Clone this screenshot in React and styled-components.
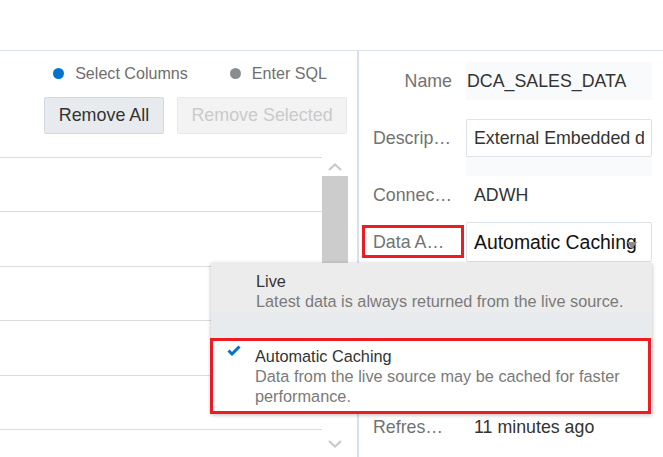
import React from 'react';
import styled, { createGlobalStyle } from 'styled-components';

const GlobalStyle = createGlobalStyle`
  html, body {
    margin: 0;
    padding: 0;
    background: #fff;
    font-family: 'Liberation Sans', Arial, sans-serif;
  }
  * {
    box-sizing: border-box;
  }
`;

const Page = styled.div`
  width: 663px;
  height: 457px;
  overflow: hidden;
  display: flex;
  flex-direction: column;
`;

const TopBar = styled.div`
  height: 51px;
  flex-shrink: 0;
  border-bottom: 1px solid #dbe3eb;
`;

const Main = styled.div`
  position: relative;
  flex: 1;
  display: flex;
  min-height: 0;
`;

const LeftPanel = styled.div`
  width: 359px;
  flex-shrink: 0;
  border-right: 2px solid #d8e1e9;
  display: flex;
  flex-direction: column;
`;

const ModeRow = styled.div`
  display: flex;
  justify-content: flex-end;
  gap: 42px;
  padding: 12px 30px 0 0;
  height: 31px;
`;

const RadioItem = styled.div`
  display: flex;
  align-items: center;
  gap: 11px;
  font-size: 16.1px;
  color: #6f6f6f;
  height: 20px;
`;

const Dot = styled.span`
  width: 11px;
  height: 11px;
  border-radius: 50%;
  background: ${({ $active }) => ($active ? '#0572ce' : '#8a8d90')};
`;

const ButtonRow = styled.div`
  display: flex;
  justify-content: flex-end;
  gap: 13px;
  padding: 15px 10px 0 0;
`;

const Button = styled.button`
  height: 37px;
  width: ${({ $width }) => $width}px;
  font-family: inherit;
  font-size: 17.9px;
  border-radius: 2px;
  padding: 0;
  border: 1px solid ${({ disabled }) => (disabled ? '#e8e8e8' : '#d3d9df')};
  background: ${({ disabled }) => (disabled ? '#f3f3f3' : '#e8ebee')};
  color: ${({ disabled }) => (disabled ? '#cacaca' : '#333')};
`;

const ListArea = styled.div`
  display: flex;
  margin-top: 23px;
  flex: 1;
  min-height: 0;
  padding-right: 9px;
`;

const RowList = styled.div`
  width: 322px;
  display: flex;
  flex-direction: column;
`;

const Row = styled.div`
  height: 54.4px;
  flex-shrink: 0;
  border-top: 1px solid #dcdcdc;
`;

const ScrollTrack = styled.div`
  width: 26px;
  display: flex;
  flex-direction: column;
  align-items: center;
`;

const ArrowBox = styled.div`
  height: ${({ $h }) => $h}px;
  display: flex;
  align-items: center;
  justify-content: center;
  width: 100%;
`;

const Thumb = styled.div`
  width: 26px;
  height: 150px;
  background: #cccccc;
`;

const TrackFill = styled.div`
  flex: 1;
`;

const RightPanel = styled.div`
  flex: 1;
  padding: 11px 0 0 14px;
  display: flex;
  flex-direction: column;
`;

const Field = styled.div`
  display: grid;
  grid-template-columns: 79px 186px;
  column-gap: 14px;
  align-items: start;
  margin-top: ${({ $gap }) => $gap || 0}px;
`;

const Label = styled.div`
  position: relative;
  height: ${({ $h }) => $h || 38}px;
  display: flex;
  align-items: center;
  justify-content: ${({ $truncated }) => ($truncated ? 'flex-start' : 'flex-end')};
  font-size: 17.8px;
  color: #727272;
  white-space: nowrap;

  ${({ $highlight }) =>
    $highlight &&
    `
    &::after {
      content: '';
      position: absolute;
      left: -11px;
      right: -12px;
      top: 3px;
      bottom: 4px;
      border: 3px solid #ed1c24;
    }
  `}
`;

const StaticValue = styled.div`
  height: 38px;
  display: flex;
  align-items: center;
  padding-left: ${({ $boxed }) => ($boxed ? 1 : 8)}px;
  background: ${({ $boxed }) => ($boxed ? '#f9fafb' : 'transparent')};
  font-size: 17.8px;
  color: #333;
  white-space: nowrap;
`;

const TextAreaBox = styled.div`
  height: 57px;
  background: #f9fafb;
`;

const TextInput = styled.div`
  height: 38px;
  border: 1px solid #dde3e9;
  border-radius: 2px;
  background: #fff;
  display: flex;
  align-items: center;
  padding-left: 7px;
  font-size: 17.8px;
  color: #333;
  white-space: nowrap;
  overflow: hidden;
`;

const Select = styled.div`
  position: relative;
  height: 40px;
  border: 1px solid #dde3e9;
  border-radius: 2px;
  background: #fff;
  display: flex;
  align-items: center;
  padding-left: 7px;
  font-size: 19.4px;
  color: #111;
  white-space: nowrap;
  overflow: hidden;
`;

const Caret = styled.span`
  position: absolute;
  z-index: 1;
  right: 14px;
  top: 19px;
  width: 0;
  height: 0;
  border-left: 5.5px solid transparent;
  border-right: 5.5px solid transparent;
  border-top: 7px solid #8a8a8a;
`;

const Dropdown = styled.div`
  position: absolute;
  left: 211px;
  top: 212px;
  width: 441px;
  background: #fff;
  box-shadow: 0 1px 4px rgba(0, 0, 0, 0.28);
  display: flex;
  flex-direction: column;
`;

const Option = styled.div`
  position: relative;
  padding: ${({ $selected }) => ($selected ? '5px 20px 5px 42px' : '8px 20px 0 45px')};
  height: ${({ $selected }) => ($selected ? 76 : 49)}px;
  background: ${({ $selected }) => ($selected ? '#fff' : '#ececec')};
  border: ${({ $selected }) => ($selected ? '3px solid #ed1c24' : 'none')};
  margin-left: ${({ $selected }) => ($selected ? -1 : 0)}px;
  margin-right: ${({ $selected }) => ($selected ? 1 : 0)}px;
`;

const OptionTitle = styled.div`
  font-size: 16.3px;
  line-height: 20px;
  color: #333;
`;

const OptionDesc = styled.div`
  font-size: 16.3px;
  line-height: 20px;
  color: #7a7a7a;
`;

const FocusBand = styled.div`
  height: 26px;
  background: #e8ebee;
`;

const Check = styled.svg`
  position: absolute;
  left: 14px;
  top: 4px;
`;

const Chevron = ({ up }) => (
  <svg width="14" height="8" viewBox="0 0 14 8">
    <polyline
      points={up ? '1,7 7,1.5 13,7' : '1,1 7,6.5 13,1'}
      fill="none"
      stroke="#c9c9c9"
      strokeWidth="2.2"
    />
  </svg>
);

const rows = [0, 1, 2, 3, 4, 5];

export default function App() {
  return (
    <>
      <GlobalStyle />
      <Page>
        <TopBar />
        <Main>
          <LeftPanel>
            <ModeRow>
              <RadioItem>
                <Dot $active />
                Select Columns
              </RadioItem>
              <RadioItem>
                <Dot />
                Enter SQL
              </RadioItem>
            </ModeRow>
            <ButtonRow>
              <Button $width={120}>Remove All</Button>
              <Button $width={170} disabled>
                Remove Selected
              </Button>
            </ButtonRow>
            <ListArea>
              <RowList>
                {rows.map(r => (
                  <Row key={r} />
                ))}
              </RowList>
              <ScrollTrack>
                <ArrowBox $h={19}>
                  <Chevron up />
                </ArrowBox>
                <Thumb />
                <TrackFill />
                <ArrowBox $h={26}>
                  <Chevron />
                </ArrowBox>
              </ScrollTrack>
            </ListArea>
          </LeftPanel>

          <RightPanel>
            <Field>
              <Label>Name</Label>
              <StaticValue $boxed>DCA_SALES_DATA</StaticValue>
            </Field>
            <Field $gap={19}>
              <Label $truncated>Descrip…</Label>
              <TextAreaBox>
                <TextInput>External Embedded d</TextInput>
              </TextAreaBox>
            </Field>
            <Field>
              <Label $truncated>Connec…</Label>
              <StaticValue>ADWH</StaticValue>
            </Field>
            <Field $gap={8}>
              <Label $truncated $highlight $h={40}>
                Data A…
              </Label>
              <Select>
                Automatic Caching
                <Caret />
              </Select>
            </Field>
            <Field $gap={146}>
              <Label $truncated>Refres…</Label>
              <StaticValue>11 minutes ago</StaticValue>
            </Field>
          </RightPanel>

          <Dropdown>
            <Option>
              <OptionTitle>Live</OptionTitle>
              <OptionDesc>Latest data is always returned from the live source.</OptionDesc>
            </Option>
            <FocusBand />
            <Option $selected>
              <Check width="14" height="11" viewBox="0 0 14 11">
                <polyline points="1.5,5.5 5,9 12.5,1.5" fill="none" stroke="#0572ce" strokeWidth="3" />
              </Check>
              <OptionTitle>Automatic Caching</OptionTitle>
              <OptionDesc>
                Data from the live source may be cached for faster
                <br />
                performance.
              </OptionDesc>
            </Option>
          </Dropdown>
        </Main>
      </Page>
    </>
  );
}
